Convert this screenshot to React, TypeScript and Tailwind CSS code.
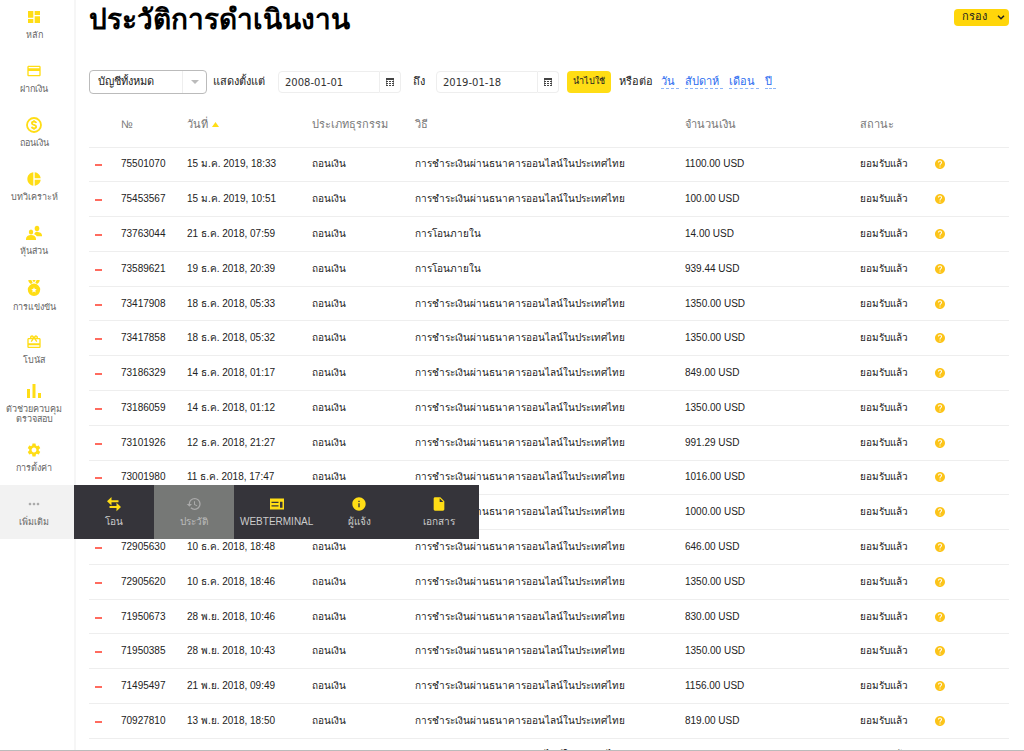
import type { ReactNode } from "react";
import {
  MdCardGiftcard,
  MdDashboard,
  MdHelp,
  MdHistory,
  MdInfo,
  MdInsertDriveFile,
  MdMoreHoriz,
  MdPayment,
  MdPieChart,
  MdSettings,
} from "react-icons/md";

type MenuItem = { label: string; icon: ReactNode };

type Operation = {
  id: string;
  date: string;
  method: string;
  amount: string;
};

const CoinIcon = () => (
  <svg width="16" height="16" viewBox="0 0 16 16" fill="none" stroke="currentColor">
    <circle cx="8" cy="8" r="7" strokeWidth="1.800" />
    <path
      d="M10.200 6C10 5.100 9.200 4.700 8 4.700c-1.300 0-2.100.6-2.100 1.500C5.900 8.400 10.200 7.500 10.200 9.800c0 1-.9 1.500-2.200 1.500s-2.100-.5-2.300-1.500M8 3.200v1.600M8 11.200v1.600"
      strokeWidth="1.800"
    />
  </svg>
);

const PartnersIcon = () => (
  <svg width="16" height="16" viewBox="0 0 16 16" fill="currentColor">
    <ellipse cx="11" cy="3.500" rx="2.300" ry="2.800" />
    <ellipse cx="5" cy="7" rx="2.200" ry="2.600" />
    <path d="M8.300 9.300c0-1.200 1-2.300 2.700-2.500 2.900.3 4.800 1.500 5 3.400v1h-5.200c-.6-.9-1.500-1.500-2.500-1.900Z" />
    <path d="M0 15v-1.500c.2-2 2-3.300 5-3.500 3 .2 4.800 1.500 5 3.500V15Z" />
  </svg>
);

const MedalIcon = () => (
  <svg width="16" height="18" viewBox="0 0 16 18" fill="currentColor">
    <path d="M2.300 1h3l1.400 2.500L5 5C3.300 4 2.300 2.800 2.300 1ZM13.700 1h-3L9.300 3.500 11 5c1.700-1 2.700-2.200 2.700-4ZM6.300 1h3.400L8 3.600Z" />
    <path
      fillRule="evenodd"
      d="M8 4.600a6.200 6.200 0 1 1 0 12.400A6.200 6.200 0 0 1 8 4.600Zm0 3.700-.8 1.700-1.900.2 1.400 1.300-.4 1.900L8 12.500l1.700.9-.4-1.900 1.400-1.300-1.900-.2Z"
    />
  </svg>
);

const BarsIcon = () => (
  <svg width="16" height="16" viewBox="0 0 16 16" fill="currentColor">
    <path d="M1 6h3v9H1ZM6.500 1h3v14h-3ZM12 10h3v5h-3Z" />
  </svg>
);

const TransferIcon = () => (
  <svg width="16" height="16" viewBox="0 0 16 16" fill="currentColor">
    <path d="M1 5.200 5.500 1v3.200h7v2h-7v3.200ZM15 11 10.500 15.200V12h-7v-2h7V6.800Z" />
  </svg>
);

const TerminalIcon = () => (
  <svg width="16" height="16" viewBox="0 0 16 16" fill="currentColor">
    <path
      fillRule="evenodd"
      d="M1 2.500h14v11H1ZM2.500 5.800v1.300h7V5.800ZM2.500 9.200v1.300h7V9.200ZM11 5.800v6h2.500v-6Z"
    />
  </svg>
);

const CalendarIcon = () => (
  <svg width="8" height="8" viewBox="0 0 8 8" fill="none" stroke="currentColor">
    <path d="M0 1h8" strokeWidth="2" />
    <path d="M0 3.500h8M0 5.500h8M0 7.500h8" strokeWidth="1" strokeDasharray="2 1" />
    <path d="M0.500 2v6M7.500 2v6" strokeWidth=".6" />
  </svg>
);

const MENU: MenuItem[] = [
  { label: "หลัก", icon: <MdDashboard size={16} /> },
  { label: "ฝากเงิน", icon: <MdPayment size={16} /> },
  { label: "ถอนเงิน", icon: <CoinIcon /> },
  { label: "บทวิเคราะห์", icon: <MdPieChart size={16} /> },
  { label: "หุ้นส่วน", icon: <PartnersIcon /> },
  { label: "การแข่งขัน", icon: <MedalIcon /> },
  { label: "โบนัส", icon: <MdCardGiftcard size={16} /> },
  { label: "ตัวช่วยควบคุม ตรวจสอบ", icon: <BarsIcon /> },
  { label: "การตั้งค่า", icon: <MdSettings size={16} /> },
];

const MORE_MENU: MenuItem[] = [
  { label: "โอน", icon: <TransferIcon /> },
  { label: "ประวัติ", icon: <MdHistory size={16} /> },
  { label: "WEBTERMINAL", icon: <TerminalIcon /> },
  { label: "ผู้แจ้ง", icon: <MdInfo size={16} /> },
  { label: "เอกสาร", icon: <MdInsertDriveFile size={16} /> },
];

const ONLINE_BANK = "การชำระเงินผ่านธนาคารออนไลน์ในประเทศไทย";
const INTERNAL = "การโอนภายใน";

const OPERATIONS: Operation[] = [
  { id: "75501070", date: "15 ม.ค. 2019, 18:33", method: ONLINE_BANK, amount: "1100.00" },
  { id: "75453567", date: "15 ม.ค. 2019, 10:51", method: ONLINE_BANK, amount: "100.00" },
  { id: "73763044", date: "21 ธ.ค. 2018, 07:59", method: INTERNAL, amount: "14.00" },
  { id: "73589621", date: "19 ธ.ค. 2018, 20:39", method: INTERNAL, amount: "939.44" },
  { id: "73417908", date: "18 ธ.ค. 2018, 05:33", method: ONLINE_BANK, amount: "1350.00" },
  { id: "73417858", date: "18 ธ.ค. 2018, 05:32", method: ONLINE_BANK, amount: "1350.00" },
  { id: "73186329", date: "14 ธ.ค. 2018, 01:17", method: ONLINE_BANK, amount: "849.00" },
  { id: "73186059", date: "14 ธ.ค. 2018, 01:12", method: ONLINE_BANK, amount: "1350.00" },
  { id: "73101926", date: "12 ธ.ค. 2018, 21:27", method: ONLINE_BANK, amount: "991.29" },
  { id: "73001980", date: "11 ธ.ค. 2018, 17:47", method: ONLINE_BANK, amount: "1016.00" },
  { id: "72962204", date: "11 ธ.ค. 2018, 09:12", method: ONLINE_BANK, amount: "1000.00" },
  { id: "72905630", date: "10 ธ.ค. 2018, 18:48", method: ONLINE_BANK, amount: "646.00" },
  { id: "72905620", date: "10 ธ.ค. 2018, 18:46", method: ONLINE_BANK, amount: "1350.00" },
  { id: "71950673", date: "28 พ.ย. 2018, 10:46", method: ONLINE_BANK, amount: "830.00" },
  { id: "71950385", date: "28 พ.ย. 2018, 10:43", method: ONLINE_BANK, amount: "1350.00" },
  { id: "71495497", date: "21 พ.ย. 2018, 09:49", method: ONLINE_BANK, amount: "1156.00" },
  { id: "70927810", date: "13 พ.ย. 2018, 18:50", method: ONLINE_BANK, amount: "819.00" },
  { id: "70901142", date: "13 พ.ย. 2018, 11:24", method: ONLINE_BANK, amount: "1350.00" },
];

const Sidebar = () => (
  <aside className="relative z-10 w-19 shrink-0 border-r-2 border-[#f6f6f6] font-['Liberation_Sans',sans-serif] text-[9px] leading-[10px] text-[#666]">
    <nav className="-mt-[3px] grid h-[542px] auto-rows-fr">
      {MENU.map((item) => (
        <a
          key={item.label}
          href="#"
          className="flex flex-col items-center justify-center gap-[5px] px-[3px] pr-[9px] text-center"
        >
          <span className="text-[#ffdd15]">{item.icon}</span>
          {item.label}
        </a>
      ))}
      <div className="relative flex bg-[#f2f2f2]">
        <button
          type="button"
          className="flex w-full flex-col items-center justify-center gap-[5px] pr-[6px]"
        >
          <MdMoreHoriz size={16} className="text-[#aaa]" />
          เพิ่มเติม
        </button>
        <div className="absolute inset-y-0 left-full flex bg-[#35343a] text-[10px] text-[#ccc]">
          {MORE_MENU.map((item, index) => (
            <a
              key={item.label}
              href="#"
              className={
                index === 1
                  ? "flex min-w-20 flex-col items-center justify-center gap-[5px] bg-[#767876] px-[6px] text-[#bbb]"
                  : "flex min-w-20 flex-col items-center justify-center gap-[5px] px-[6px]"
              }
            >
              <span className={index === 1 ? "text-[#aaa]" : "text-[#ffdd15]"}>{item.icon}</span>
              {item.label}
            </a>
          ))}
        </div>
      </div>
    </nav>
  </aside>
);

const DateField = ({ label, value }: { label: string; value: string }) => (
  <div className="flex h-[22px]">
    <input
      type="text"
      aria-label={label}
      defaultValue={value}
      className="w-[102px] rounded-l-sm border border-[#eee] px-[6px] text-[10px] text-[#333]"
    />
    <button
      type="button"
      aria-label={label}
      className="flex w-[21px] items-center justify-center rounded-r-sm border border-l-0 border-[#eee] text-[#444]"
    >
      <CalendarIcon />
    </button>
  </div>
);

const Filters = () => (
  <form className="mt-[30px] flex h-6 items-center text-[11px] text-[#222]">
    <div className="relative mr-[6px] h-6 w-[118px]">
      <select
        aria-label="บัญชี"
        className="h-full w-full appearance-none rounded-sm border border-[#bbb] bg-white px-2"
      >
        <option>บัญชีทั้งหมด</option>
      </select>
      <span className="pointer-events-none absolute inset-y-px right-px flex w-6 items-center justify-center border-l border-[#eee]">
        <svg width="8" height="4" viewBox="0 0 8 4" fill="#bbb">
          <path d="M0 0h8L4 4Z" />
        </svg>
      </span>
    </div>
    <span className="w-[65px]">แสดงตั้งแต่</span>
    <DateField label="จากวันที่" value="2008-01-01" />
    <span className="w-[35px] text-center">ถึง</span>
    <DateField label="ถึงวันที่" value="2019-01-18" />
    <button type="button" className="ml-2 h-[22px] w-11 rounded-sm bg-[#ffdd15] text-[9px]">
      นำไปใช้
    </button>
    <span className="mx-2">หรือต่อ</span>
    <div className="flex gap-[6px] text-[#2a6cf0]">
      {["วัน", "สัปดาห์", "เดือน", "ปี"].map((period) => (
        <a key={period} href="#" className="border-b border-dashed border-[#8db5f8] pr-1 leading-3">
          {period}
        </a>
      ))}
    </div>
  </form>
);

const OperationsTable = () => (
  <table className="mt-2 h-[670px] w-full table-fixed border-collapse text-left font-['Liberation_Sans',sans-serif] text-[10px] leading-3 text-[#222]">
    <colgroup>
      <col className="w-8" />
      <col className="w-[66px]" />
      <col className="w-[125px]" />
      <col className="w-[103px]" />
      <col />
      <col className="w-[175px]" />
      <col className="w-[74px]" />
      <col className="w-[75px]" />
    </colgroup>
    <thead className="text-[11px] text-[#777]">
      <tr className="h-[45px]">
        <th aria-label="ทิศทาง" />
        <th className="font-normal">№</th>
        <th className="font-normal">
          <span className="flex items-center gap-1">
            วันที่
            <svg width="7" height="5" viewBox="0 0 7 5" fill="#ffdd15">
              <path d="M0 5h7L3.500 0Z" />
            </svg>
          </span>
        </th>
        <th className="font-normal">ประเภทธุรกรรม</th>
        <th className="font-normal">วิธี</th>
        <th className="font-normal">จำนวนเงิน</th>
        <th className="font-normal">สถานะ</th>
        <th aria-label="ช่วยเหลือ" />
      </tr>
    </thead>
    <tbody>
      {OPERATIONS.map((operation) => (
        <tr key={operation.id} className="border-t border-[#eee]">
          <td className="pt-[2px]">
            <span className="ml-[6px] block h-[2px] w-[7px] bg-[#ff6b5e]" />
          </td>
          <td>{operation.id}</td>
          <td>{operation.date}</td>
          <td>ถอนเงิน</td>
          <td>{operation.method}</td>
          <td>{operation.amount} USD</td>
          <td>ยอมรับแล้ว</td>
          <td>
            <MdHelp size={12} className="text-[#fcc419]" />
          </td>
        </tr>
      ))}
    </tbody>
  </table>
);

const HistoryPage = () => {
  return (
    <div className="flex h-screen overflow-hidden border-b border-[#bbb] bg-white font-['DejaVu_Sans',sans-serif]">
      <Sidebar />
      <main className="min-w-0 flex-1 pr-[15px] pl-[13px]">
        <header className="flex h-10 items-start justify-between">
          <h1 className="text-[28px] leading-10 font-bold text-black">ประวัติการดำเนินงาน</h1>
          <button
            type="button"
            className="mt-[9px] flex h-[17px] w-[55px] items-center justify-between rounded-sm bg-[#ffd60a] pr-1 pl-2 text-[11px] text-[#222]"
          >
            กรอง
            <svg width="8" height="5" viewBox="0 0 8 5" fill="none" stroke="currentColor" strokeWidth="1.500">
              <path d="M1 .8 4 3.800 7 .8" />
            </svg>
          </button>
        </header>
        <Filters />
        <OperationsTable />
      </main>
    </div>
  );
};

export default HistoryPage;
